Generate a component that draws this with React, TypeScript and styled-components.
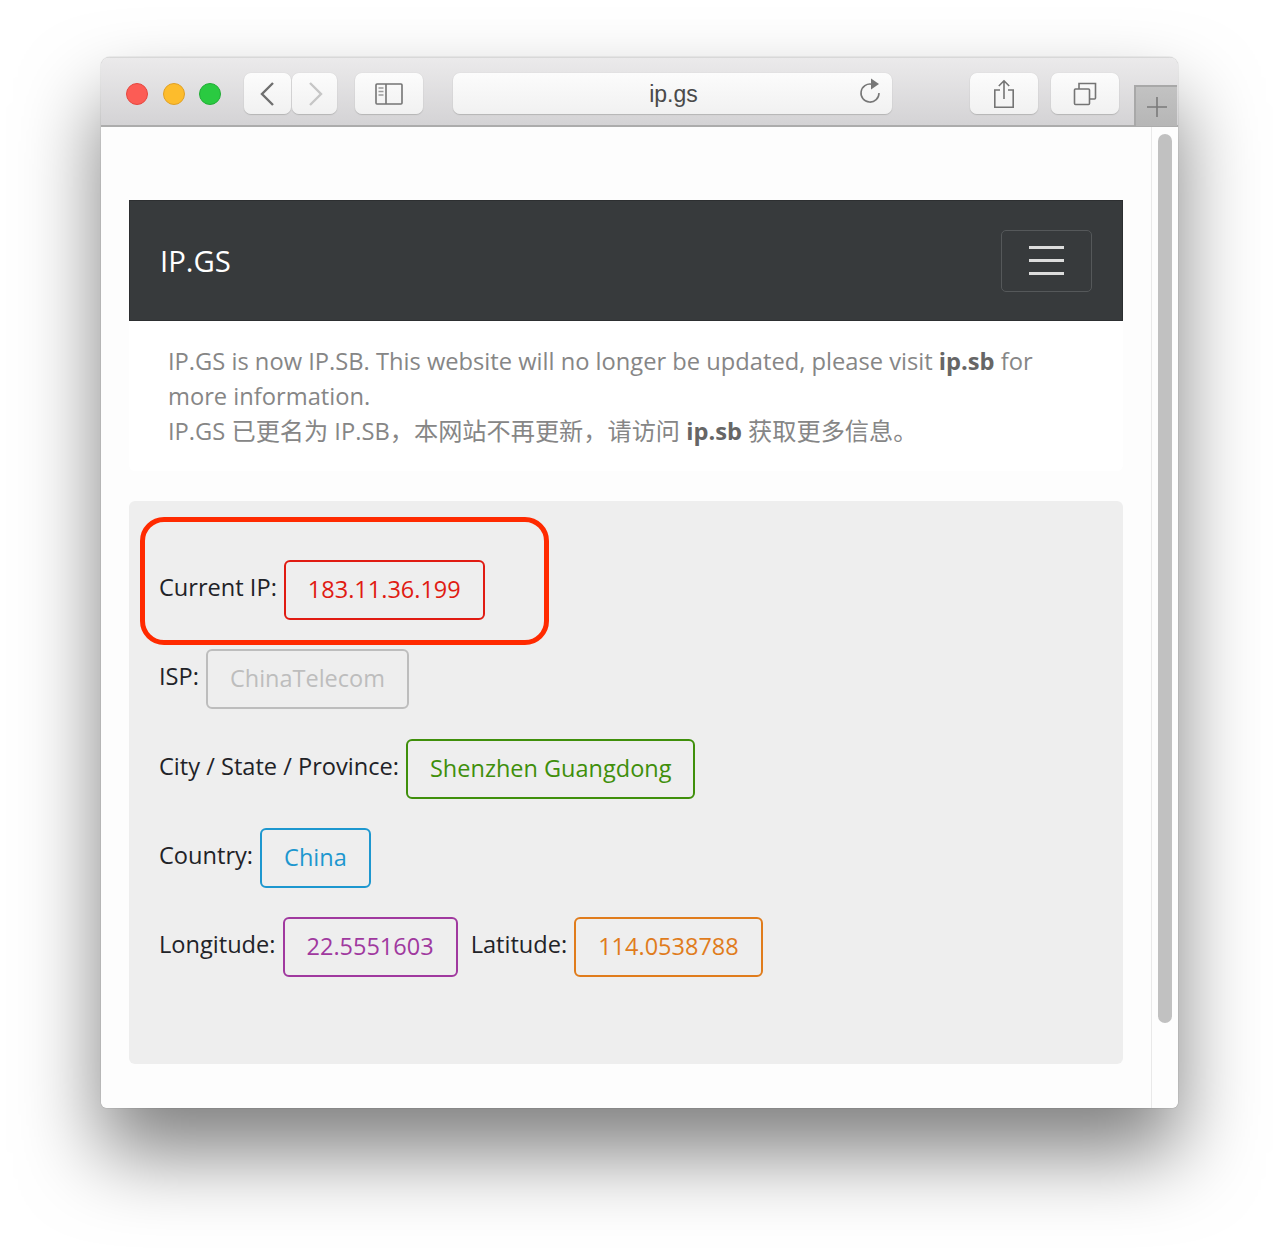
import styled, { createGlobalStyle } from "styled-components";

const GlobalStyle = createGlobalStyle`
  html, body {
    margin: 0;
    padding: 0;
    background: #fff;
  }
  body {
    font-family: "Open Sans", "Noto Sans CJK SC", sans-serif;
  }
`;

const fields = [
  [{ label: "Current IP:", value: "183.11.36.199", color: "#e01b12" }],
  [{ label: "ISP:", value: "ChinaTelecom", color: "#bdbdbd" }],
  [{ label: "City / State / Province:", value: "Shenzhen Guangdong", color: "#3f8f0b" }],
  [{ label: "Country:", value: "China", color: "#1d97cf" }],
  [
    { label: "Longitude:", value: "22.5551603", color: "#a0399f" },
    { label: "Latitude:", value: "114.0538788", color: "#e07c1c" },
  ],
];

const App = () => {
  return (
    <Page>
      <GlobalStyle />
      <Window>
        <Toolbar>
          <Lights>
            <Light $color="#fc5c55" $edge="#e5473f" />
            <Light $color="#fdbc2c" $edge="#e0a024" />
            <Light $color="#2aca41" $edge="#22ad36" />
          </Lights>
          <ToolButton $width={47} $left={23}>
            <svg width="20" height="26" viewBox="0 0 20 26" fill="none" stroke="#6f6f6f" strokeWidth="2.4">
              <path d="M15 2 4 13l11 11" />
            </svg>
          </ToolButton>
          <ToolButton $width={45} $left={1}>
            <svg width="20" height="26" viewBox="0 0 20 26" fill="none" stroke="#c6c6c6" strokeWidth="2.4">
              <path d="M5 2l11 11L5 24" />
            </svg>
          </ToolButton>
          <ToolButton $width={68} $left={18}>
            <svg width="28" height="22" viewBox="0 0 28 22" fill="none">
              <rect x="1" y="1" width="26" height="20" rx="1" stroke="#747474" strokeWidth="1.6" />
              <path d="M11 1v20" stroke="#747474" strokeWidth="1.6" />
              <path d="M3.5 5h5M3.5 8.5h5M3.5 12h5" stroke="#9a9a9a" strokeWidth="1.6" />
            </svg>
          </ToolButton>
          <AddressBar>
            <Host>ip.gs</Host>
            <Reload width="24" height="28" viewBox="0 0 24 28" fill="none">
              <path d="M14 6.3A9 9 0 1 0 21 15" stroke="#777" strokeWidth="1.6" />
              <path d="M13 0.5 21 6l-8 5.5z" fill="#777" />
            </Reload>
          </AddressBar>
          <ToolButton $width={68} $left={78}>
            <svg width="24" height="30" viewBox="0 0 24 30" fill="none" stroke="#747474" strokeWidth="1.6">
              <path d="M8 11H2.8v17.2h18.4V11H16" />
              <path d="M12 20V2M6.8 7 12 1.8 17.2 7" />
            </svg>
          </ToolButton>
          <ToolButton $width={68} $left={13}>
            <svg width="24" height="24" viewBox="0 0 24 24" fill="none" stroke="#747474" strokeWidth="1.6">
              <rect x="1.5" y="7" width="15" height="15.5" rx="1" />
              <path d="M6 7V1.5h16.5v14.5a1 1 0 0 1-1 1h-5" />
            </svg>
          </ToolButton>
          <NewTab>
            <svg width="20" height="20" viewBox="0 0 20 20" stroke="#7a7a7a" strokeWidth="1.6">
              <path d="M10 0v20M0 10h20" />
            </svg>
          </NewTab>
        </Toolbar>
        <Viewport>
          <Content>
            <Navbar>
              <Brand>IP.GS</Brand>
              <Burger>
                <BurgerLine />
                <BurgerLine />
                <BurgerLine />
              </Burger>
            </Navbar>
            <Notice>
              IP.GS is now IP.SB. This website will no longer be updated, please visit <b>ip.sb</b> for more information.
              <br />
              IP.GS <Han>已更名为</Han> IP.SB<Han>，本网站不再更新，请访问</Han> <b>ip.sb</b> <Han>获取更多信息。</Han>
            </Notice>
            <Jumbotron>
              <Annotation />
              {fields.map((row) => (
                <Row key={row[0].label}>
                  {row.map((field) => (
                    <Field key={field.label}>
                      <Label>{field.label}</Label>
                      <Value $color={field.color}>{field.value}</Value>
                    </Field>
                  ))}
                </Row>
              ))}
            </Jumbotron>
          </Content>
          <ScrollGutter>
            <ScrollThumb />
          </ScrollGutter>
        </Viewport>
      </Window>
    </Page>
  );
};

const Page = styled.div`
  width: 1280px;
  height: 1254px;
  box-sizing: border-box;
  padding: 57px 0 0 101px;
  overflow: hidden;
`;
const Window = styled.div`
  width: 1077px;
  height: 1051px;
  display: flex;
  flex-direction: column;
  border-radius: 9px 9px 6px 6px;
  overflow: hidden;
  box-shadow: 0 45px 80px rgba(0, 0, 0, 0.5), 0 0 1px rgba(0, 0, 0, 0.5);
`;
const Toolbar = styled.div`
  height: 70px;
  box-sizing: border-box;
  display: flex;
  padding: 15px 0 0 25px;
  background: linear-gradient(#ebeaeb, #d4d3d5);
  border-top: 1px solid #d8d8d8;
  border-bottom: 2px solid #acacac;
`;
const Lights = styled.div`
  display: flex;
  gap: 14.5px;
  height: 41px;
  align-items: center;
`;
const Light = styled.span<{ $color: string; $edge: string }>`
  width: 22px;
  height: 22px;
  border-radius: 50%;
  box-sizing: border-box;
  background: ${(p) => p.$color};
  border: 1px solid ${(p) => p.$edge};
`;
const ToolButton = styled.div<{ $width: number; $left: number }>`
  width: ${(p) => p.$width}px;
  margin-left: ${(p) => p.$left}px;
  height: 41px;
  box-sizing: border-box;
  display: flex;
  align-items: center;
  justify-content: center;
  background: linear-gradient(#fcfcfc, #f1f1f1);
  border-radius: 7px;
  box-shadow: 0 1px 1px #b5b5b5, 0 0 1px #c4c4c4;
`;
const AddressBar = styled(ToolButton).attrs({ $width: 439, $left: 30 })`
  position: relative;
`;
const Host = styled.span`
  font-family: "Liberation Sans", sans-serif;
  font-size: 23px;
  color: #4a4a4a;
  position: relative;
  top: 1px;
  left: 1px;
`;
const Reload = styled.svg`
  position: absolute;
  right: 10px;
  top: 5px;
`;
const NewTab = styled.div`
  width: 43px;
  height: 41px;
  margin-left: 15px;
  margin-top: 12px;
  box-sizing: border-box;
  display: flex;
  align-items: center;
  justify-content: center;
  background: linear-gradient(#c2c2c2, #b6b6b6);
  border-top: 2px solid #a8a8a8;
  border-left: 2px solid #a8a8a8;
`;
const Viewport = styled.div`
  flex: 1;
  display: flex;
  background: #fdfdfd;
`;
const Content = styled.div`
  flex: 1;
  padding: 73px 28px 0 28px;
  min-width: 0;
`;
const Navbar = styled.div`
  height: 121px;
  box-sizing: border-box;
  display: flex;
  align-items: center;
  justify-content: space-between;
  padding: 0 30px;
  background: #373a3c;
  border: 1px solid #2d2f31;
`;
const Brand = styled.span`
  font-size: 29.3px;
  color: #fff;
`;
const Burger = styled.div`
  width: 91px;
  height: 62px;
  box-sizing: border-box;
  display: flex;
  flex-direction: column;
  align-items: center;
  justify-content: center;
  gap: 10px;
  padding-right: 1px;
  border: 1px solid #55585a;
  border-radius: 5px;
`;
const BurgerLine = styled.span`
  width: 35px;
  height: 3px;
  background: #dcdcdc;
`;
const Notice = styled.div`
  height: 150px;
  box-sizing: border-box;
  padding: 23px 39px 0;
  font-size: 23.7px;
  line-height: 35px;
  color: #868686;
  background: #fff;
  border-radius: 0 0 6px 6px;

  b {
    font-weight: 700;
    color: #666;
  }
`;
const Han = styled.span`
  font-size: 24.2px;
  line-height: 1;
`;
const Jumbotron = styled.div`
  position: relative;
  height: 563px;
  margin-top: 30px;
  box-sizing: border-box;
  padding: 59px 30px 0;
  display: flex;
  flex-direction: column;
  gap: 29.3px;
  background: #eeeeee;
  border-radius: 6px;
`;
const Annotation = styled.div`
  position: absolute;
  left: 11px;
  top: 16px;
  width: 409px;
  height: 128px;
  box-sizing: border-box;
  border: 5px solid #ff2a00;
  border-radius: 24px;
`;
const Row = styled.div`
  display: flex;
  gap: 13px;
`;
const Field = styled.div`
  display: flex;
  align-items: center;
  gap: 7px;
`;
const Label = styled.span`
  font-size: 23.6px;
  color: #1f2328;
  position: relative;
  top: -3px;
`;
const Value = styled.span<{ $color: string }>`
  height: 60px;
  box-sizing: border-box;
  padding: 0 22px 2px;
  display: flex;
  align-items: center;
  font-size: 23.5px;
  color: ${(p) => p.$color};
  border: 2px solid ${(p) => p.$color};
  border-radius: 6px;
`;
const ScrollGutter = styled.div`
  width: 27px;
  box-sizing: border-box;
  padding: 7px 0 0 6px;
  border-left: 1px solid #e9e9e9;
`;
const ScrollThumb = styled.div`
  width: 14px;
  height: 889px;
  border-radius: 7px;
  background: #c1c1c1;
`;

export default App;
